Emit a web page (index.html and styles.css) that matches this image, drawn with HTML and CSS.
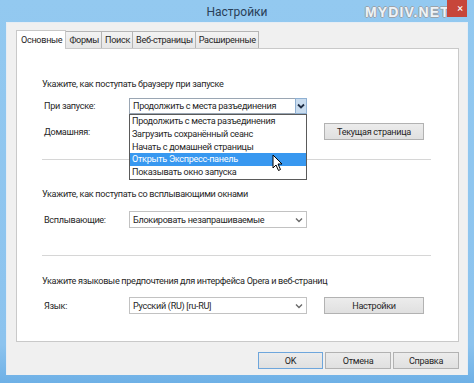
FILE: index.html
```html
<!DOCTYPE html>
<html lang="ru">
<head>
<meta charset="utf-8">
<title>Настройки</title>
<link rel="stylesheet" href="styles.css">
</head>
<body>
<div class="window">
  <div class="titlebar">
    <span class="title">Настройки</span>
    <span class="watermark">MYDIV.NET</span>
    <span class="close">×</span>
  </div>
  <div class="client">
    <div class="tabs">
      <div class="tab active">Основные</div>
      <div class="tab">Формы</div>
      <div class="tab">Поиск</div>
      <div class="tab">Веб-страницы</div>
      <div class="tab">Расширенные</div>
    </div>
    <div class="panel">
      <div class="heading h1">Укажите, как поступать браузеру при запуске</div>
      <div class="grid g1">
        <div class="label">При запуске:</div>
        <div class="select open">
          <span class="value">Продолжить с места разъединения</span>
          <span class="arrowbox"><svg width="8" height="6" viewBox="0 0 8 6"><path d="M1 1.5 L4 4.5 L7 1.5" fill="none" stroke="#1f2d44" stroke-width="1.8"/></svg></span>
          <div class="list">
            <div class="item">Продолжить с места разъединения</div>
            <div class="item">Загрузить сохранённый сеанс</div>
            <div class="item">Начать с домашней страницы</div>
            <div class="item sel">Открыть Экспресс-панель</div>
            <div class="item">Показывать окно запуска</div>
            <svg class="cursor" width="12" height="18" viewBox="0 0 12 18"><path d="M1 1 L1 14 L4 11 L6.5 16.5 L8.5 15.5 L6 10 L10 10 Z" fill="#fff" stroke="#000" stroke-width="1" stroke-linejoin="round"/></svg>
          </div>
        </div>
      </div>
      <div class="grid g2">
        <div class="label">Домашняя:</div>
        <div></div>
        <div class="button">Текущая страница</div>
      </div>
      <div class="sep s1"></div>
      <div class="heading h2">Укажите, как поступать со всплывающими окнами</div>
      <div class="grid g3">
        <div class="label">Всплывающие:</div>
        <div class="select">
          <span class="value">Блокировать незапрашиваемые</span>
          <span class="chev"><svg width="8" height="6" viewBox="0 0 8 6"><path d="M1 1.5 L4 4.5 L7 1.5" fill="none" stroke="#6a6a6a" stroke-width="1.4"/></svg></span>
        </div>
      </div>
      <div class="sep s2"></div>
      <div class="heading h3">Укажите языковые предпочтения для интерфейса Opera и веб-страниц</div>
      <div class="grid g4">
        <div class="label">Язык:</div>
        <div class="select">
          <span class="value">Русский (RU) [ru-RU]</span>
          <span class="chev"><svg width="8" height="6" viewBox="0 0 8 6"><path d="M1 1.5 L4 4.5 L7 1.5" fill="none" stroke="#6a6a6a" stroke-width="1.4"/></svg></span>
        </div>
        <div class="button">Настройки</div>
      </div>
    </div>
    <div class="footer">
      <div class="button fb default">OK</div>
      <div class="button fb">Отмена</div>
      <div class="button fb">Справка</div>
    </div>
  </div>
</div>
</body>
</html>
```
FILE: styles.css
```css
* { box-sizing: border-box; }
html, body { margin: 0; padding: 0; }
body {
  width: 474px;
  height: 383px;
  overflow: hidden;
  background: #8fc5ef;
  font-family: Roboto, "Open Sans", sans-serif;
  font-size: 9.1px;
  letter-spacing: -0.3px;
  color: #262626;
}
.window {
  width: 474px;
  height: 383px;
  display: flex;
  flex-direction: column;
  background: linear-gradient(#93c9f0, #8cc3ee 90%, #6eb0e6);
}
.titlebar {
  position: relative;
  height: 22px;
  flex: none;
  display: flex;
  align-items: center;
  justify-content: center;
}
.title {
  font-size: 12px;
  letter-spacing: 0;
  color: #2a3f58;
  margin-top: 2px;
}
.watermark {
  position: absolute;
  left: 365px;
  top: 4px;
  font-family: "Liberation Sans", sans-serif;
  font-weight: bold;
  font-size: 14px;
  letter-spacing: 1.1px;
  color: #eef3f7;
  text-shadow: 1px 0 0 #9aa3ab, -1px 0 0 #9aa3ab, 0 1px 0 #9aa3ab, 0 -1px 0 #9aa3ab;
}
.close {
  position: absolute;
  right: 7px;
  top: 0;
  width: 20px;
  height: 17px;
  background: #c7463a;
  color: #fff;
  font-size: 11px;
  letter-spacing: 0;
  display: flex;
  align-items: center;
  justify-content: flex-end;
  padding-right: 4px;
}
.client {
  margin: 0 6px;
  height: 353px;
  background: #f0f0f0;
  border: 1px solid #e6edf4;
  border-bottom: 0;
  padding: 7px 8px 0 9px;
}
.tabs {
  display: flex;
  align-items: flex-end;
  height: 18px;
  position: relative;
  z-index: 1;
}
.tab {
  height: 17px;
  padding: 0 2px 0 3px;
  border: 1px solid #b5b5b5;
  border-bottom: 0;
  border-left: 0;
  background: linear-gradient(#f3f3f3, #e6e6e6);
  display: flex;
  align-items: center;
}
.tab.active {
  height: 19px;
  background: #fff;
  border-left: 1px solid #c8c8c8;
  border-color: #c8c8c8;
  padding: 0 3px 1px 4px;
  margin-bottom: -1px;
}
.panel {
  position: relative;
  width: 443px;
  height: 294px;
  background: #fff;
  border: 1px solid #c9c9c9;
  padding: 28px 0 0 25px;
}
.heading {
  height: 14px;
  line-height: 14px;
  white-space: nowrap;
}
.h2 { margin-top: 27px; }
.h3 { margin-top: 18px; }
.grid {
  display: grid;
  grid-template-columns: 85px 178px 117px;
  align-items: center;
  padding-left: 2px;
}
.grid .button { margin-left: 17px; }
.g1 { margin-top: 7px; height: 16px; }
.g2 { margin-top: 9px; height: 17px; }
.g3 { margin-top: 10px; height: 17px; }
.g4 { margin-top: 9px; height: 17px; }
.label {
  white-space: nowrap;
  line-height: 14px;
}
.select {
  position: relative;
  height: 17px;
  border: 1px solid #c2c2c2;
  background: #fff;
  display: flex;
  align-items: center;
  padding-left: 3px;
  white-space: nowrap;
}
.g1 .select { height: 16px; border-color: #9aa6b3; }
.select .value { flex: 1; }
.arrowbox {
  width: 12px;
  align-self: stretch;
  margin: -1px -1px -1px 0;
  background: #c9dcef;
  border: 1px solid #8fb0d2;
  display: flex;
  align-items: center;
  justify-content: center;
}
.chev {
  width: 14px;
  display: flex;
  align-items: center;
  justify-content: center;
  margin-top: 1px;
}
.list {
  position: absolute;
  left: -1px;
  top: 15px;
  width: 178px;
  background: #fff;
  border: 1px solid #5a5a5a;
  z-index: 2;
}
.item {
  height: 12.8px;
  line-height: 12.8px;
  padding-left: 2px;
  white-space: nowrap;
}
.item.sel {
  background: #3898f0;
  color: #fff;
}
.cursor {
  position: absolute;
  left: 142px;
  top: 39px;
}
.button {
  height: 17px;
  border: 1px solid #b2b2b2;
  background: linear-gradient(#ececec, #e0e0e0);
  display: flex;
  align-items: center;
  justify-content: center;
  white-space: nowrap;
}
.sep {
  height: 1px;
  width: 389px;
  background: #d6d6d6;
}
.s1 { margin-top: 19px; }
.s2 { margin-top: 27px; }
.footer {
  display: flex;
  justify-content: flex-end;
  gap: 2px;
  width: 443px;
  margin-top: 10px;
}
.fb {
  width: 66px;
  height: 17px;
}
.fb.default { border-color: #6ea6dc; width: 65px; }
```
